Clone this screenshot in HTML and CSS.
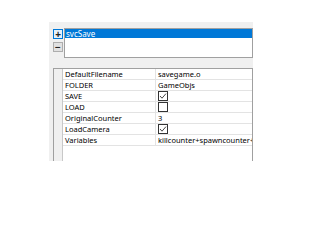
FILE: index.html
```html
<!DOCTYPE html>
<html>
<head>
<meta charset="utf-8">
<link rel="stylesheet" href="styles.css">
</head>
<body>
<div class="panel">
  <div class="top">
    <div class="btns">
      <div class="btn plus">+</div>
      <div class="btn minus">−</div>
    </div>
    <div class="list">
      <div class="item sel">svcSave</div>
    </div>
  </div>
  <div class="grid">
    <div class="gutter"></div>
    <div class="rows">
      <div class="row"><div class="name">DefaultFilename</div><div class="val">savegame.o</div></div>
      <div class="row"><div class="name">FOLDER</div><div class="val">GameObjs</div></div>
      <div class="row"><div class="name">SAVE</div><div class="val"><span class="cb"><svg viewBox="0 0 10 10" width="10" height="10"><path d="M2 5 L4 7.2 L8 2.6" fill="none" stroke="#333" stroke-width="0.9"/></svg></span></div></div>
      <div class="row"><div class="name">LOAD</div><div class="val"><span class="cb"></span></div></div>
      <div class="row"><div class="name">OriginalCounter</div><div class="val">3</div></div>
      <div class="row"><div class="name">LoadCamera</div><div class="val"><span class="cb"><svg viewBox="0 0 10 10" width="10" height="10"><path d="M2 5 L4 7.2 L8 2.6" fill="none" stroke="#333" stroke-width="0.9"/></svg></span></div></div>
      <div class="row"><div class="name">Variables</div><div class="val">killcounter+spawncounter+bossdefeated</div></div>
    </div>
  </div>
</div>
</body>
</html>
```
FILE: styles.css
```css
html, body { margin: 0; padding: 0; background: #fff; }
body { font-family: "Noto Sans", "Open Sans", sans-serif; font-size: 7.5px; color: #000; }
.panel {
  margin: 22px 0 0 49px;
  width: 204px;
  height: 139px;
  background: #f0f0f0;
  display: flex;
  flex-direction: column;
  padding: 6px 0 0 4px;
  box-sizing: border-box;
}
.top { display: flex; height: 30px; }
.btns { display: flex; flex-direction: column; gap: 3px; padding-top: 1px; width: 11px; }
.btn {
  width: 10px; height: 10px; box-sizing: border-box;
  display: flex; align-items: center; justify-content: center;
  font-size: 10px; line-height: 10px; font-weight: bold; color: #222;
  background: #e1e1e1; border: 1px solid #adadad;
}
.btn.plus { background: #e5f1fb; border-color: #0078d7; }
.list {
  flex: 1; background: #fff; border: 1px solid #a0a0a0;
  box-sizing: border-box; height: 30px;
}
.item { height: 9px; line-height: 9px; padding-left: 1px; font-size: 8px; }
.item.sel { background: #0078d7; color: #fff; }
.grid {
  margin-top: 10px; flex: 1; display: flex;
  background: #fff; border: 1px solid #a0a0a0; border-bottom: none;
}
.gutter { width: 8px; background: #f0f0f0; border-right: 1px solid #c8c8c8; }
.rows { flex: 1; display: flex; flex-direction: column; overflow: hidden; }
.row { display: flex; height: 11px; border-bottom: 1px solid #e3e3e3; box-sizing: border-box; }
.name { width: 90px; border-right: 1px solid #e3e3e3; padding-left: 2px; line-height: 10px; white-space: nowrap; overflow: hidden; }
.val { flex: 1; padding-left: 2px; line-height: 10px; white-space: nowrap; overflow: hidden; display: flex; align-items: center; }
.cb { width: 10px; height: 10px; box-sizing: border-box; border: 1px solid #333; display: block; background: #fff; }
.cb svg { display: block; margin: -1px; }
```
